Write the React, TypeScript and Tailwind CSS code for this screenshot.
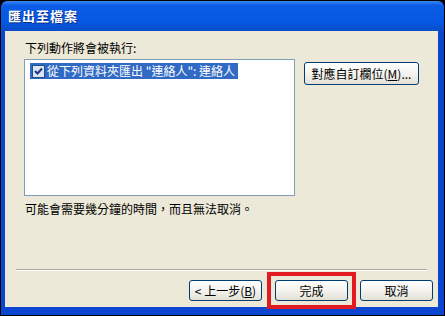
import React from 'react';

const font = { fontFamily: '"Noto Sans CJK TC", "Noto Sans", sans-serif' };

function XpButton({ children, className = '' }: { children: React.ReactNode; className?: string }) {
  return (
    <button
      className={`h-[21px] rounded-[3px] border border-[#003C74] bg-gradient-to-b from-white via-[#F4F3EE] to-[#E3E1D6] text-[12px] leading-none text-black flex items-center justify-center ${className}`}
    >
      {children}
    </button>
  );
}

export default function App() {
  return (
    <div className="w-[445px] h-[316px] bg-black p-px flex flex-col" style={font}>
      {/* title bar */}
      <div className="h-[30px] shrink-0 rounded-t-[6px] bg-[linear-gradient(to_bottom,#3D86F2_0%,#0B5CE6_15%,#0558E3_70%,#0A4CC8_100%)] flex items-center pl-[7px]">
        <span className="text-white text-[13px] font-bold tracking-[1px] [text-shadow:1px_1px_0_#0A2A80]">匯出至檔案</span>
      </div>

      {/* body */}
      <div className="flex-1 flex flex-col bg-[#ECE9D8] border-l-4 border-r-[6px] border-b-[8px] border-[#0B45D0]">
        <div className="pl-[19px] pt-[9px] flex flex-col">
          <div className="text-[12px] leading-[15px] text-black pl-px">下列動作將會被執行:</div>
          <div className="flex mt-[4px]">
            <div className="w-[271px] h-[137px] bg-white border border-[#7F9DB9] pt-[3px] pl-[5px]">
              <div className="flex items-center h-[16px]">
                <div className="w-[16px] h-[16px] bg-[#316AC5] flex items-center justify-center">
                  <div className="w-[13px] h-[13px] border border-[#1C5180] bg-[#DCE4F2] flex items-center justify-center">
                    <svg width="9" height="9" viewBox="0 0 9 9">
                      <path d="M1 4 L3.5 6.5 L8 1.5" stroke="#1B3A8C" strokeWidth="2" fill="none" />
                    </svg>
                  </div>
                </div>
                <span className="bg-[#316AC5] text-white text-[12px] leading-[16px] h-[16px] pl-[1px] pr-[3px]">從下列資料夾匯出 "連絡人": 連絡人</span>
              </div>
            </div>
            <XpButton className="ml-[9px] mt-[3px] w-[115px] h-[23px]">對應自訂欄位(<span className="underline">M</span>)...</XpButton>
          </div>
          <div className="text-[12px] leading-[15px] text-black pl-px mt-[5px]">可能會需要幾分鐘的時間，而且無法取消。</div>
        </div>

        <div className="flex-1" />
        <div className="mx-[11px] h-[2px] border-t border-[#ACA899] border-b border-b-white" />
        <div className="flex justify-end pr-[5px] pt-[9px] pb-[6px] gap-[13px]">
          <XpButton className="w-[73px]">&lt; 上一步(<span className="underline">B</span>)</XpButton>
          <div className="relative">
            <XpButton className="w-[73px]">完成</XpButton>
            <div className="absolute -left-[8px] -right-[8px] -top-[8px] -bottom-[8px] border-4 border-[#E21A22]" />
          </div>
          <XpButton className="w-[73px] -ml-px">取消</XpButton>
        </div>
      </div>
    </div>
  );
}
